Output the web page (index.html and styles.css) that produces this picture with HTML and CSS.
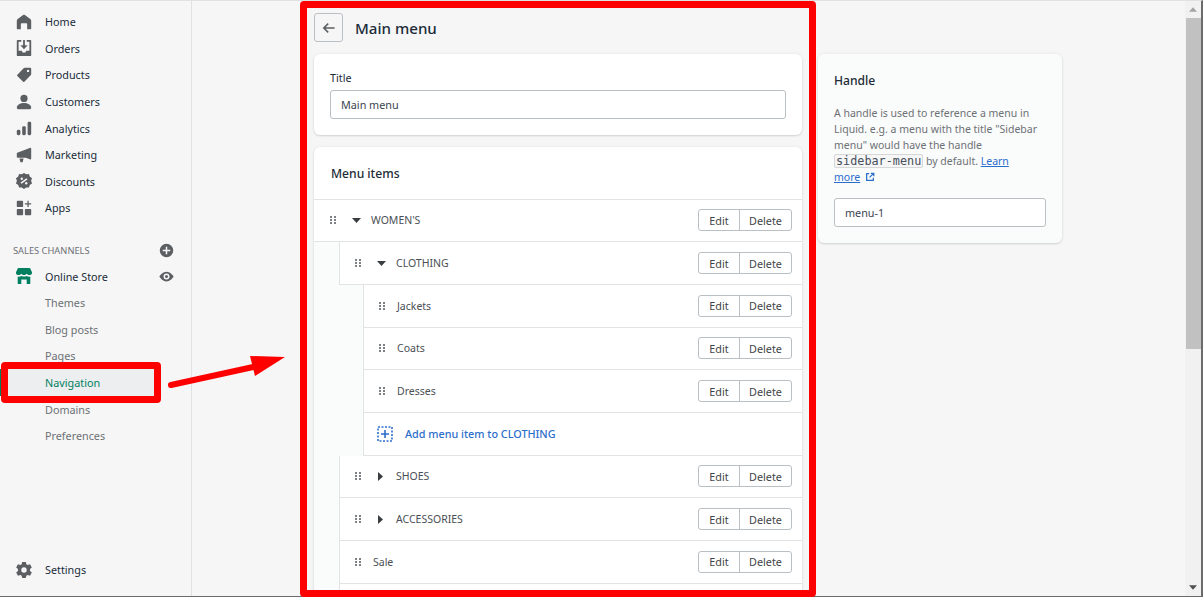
FILE: index.html
```html
<!DOCTYPE html>
<html lang="en">
<head>
<meta charset="utf-8">
<title>Main menu</title>
<link rel="stylesheet" href="styles.css">
</head>
<body>
<svg class="defs" aria-hidden="true">
  <symbol id="grip" viewBox="0 0 6 8"><g fill="#7d8185"><rect x="0" y="0" width="2" height="2"/><rect x="4" y="0" width="2" height="2"/><rect x="0" y="3" width="2" height="2"/><rect x="4" y="3" width="2" height="2"/><rect x="0" y="6" width="2" height="2"/><rect x="4" y="6" width="2" height="2"/></g></symbol>
  <symbol id="down" viewBox="0 0 9 5"><path d="M0 0h9L4.500 5z" fill="#3a3d40"/></symbol>
  <symbol id="right" viewBox="0 0 5 9"><path d="M0 0v9l5-4.500z" fill="#3a3d40"/></symbol>
</svg>
<div class="app">
  <aside class="sidebar">
    <nav class="nav">
      <a class="nav-item"><svg class="ico" viewBox="0 0 20 20"><path d="M2 9c0-1 .4-1.700 1-2.200L9 2.200c.6-.5 1.400-.5 2 0l6 4.600c.6.5 1 1.200 1 2.200v8c0 .6-.4 1-1 1h-3.500v-5.500a1 1 0 0 0-1-1h-5a1 1 0 0 0-1 1V18H3c-.6 0-1-.4-1-1z"/></svg>Home</a>
      <a class="nav-item"><svg class="ico" viewBox="0 0 20 20"><path d="M3 1h4v2H4v10h3.500l1 2h3l1-2H16V3h-3V1h4a1 1 0 0 1 1 1v16a1 1 0 0 1-1 1H3a1 1 0 0 1-1-1V2a1 1 0 0 1 1-1z"/><path d="M9 1h2v6h3l-4 4.500L6 7h3z"/></svg>Orders</a>
      <a class="nav-item"><svg class="ico" viewBox="0 0 20 20"><path fill-rule="evenodd" d="M11 2h6a1 1 0 0 1 1 1v6c0 .5-.2 1-.6 1.400l-7 7a1 1 0 0 1-1.400 0l-6.400-6.400a1 1 0 0 1 0-1.400l7-7C9.900 2.200 10.500 2 11 2zm3.500 2.200a1.300 1.300 0 1 0 0 2.600 1.300 1.300 0 0 0 0-2.600z"/></svg>Products</a>
      <a class="nav-item"><svg class="ico" viewBox="0 0 20 20"><circle cx="10" cy="6" r="4"/><path d="M2 16c0-3 4-5 8-5s8 2 8 5c0 1.200-1 2-2 2H4c-1 0-2-.8-2-2z"/></svg>Customers</a>
      <a class="nav-item"><svg class="ico" viewBox="0 0 20 20"><rect x="2" y="12" width="4" height="6" rx="1.500"/><rect x="8" y="8" width="4" height="10" rx="1.500"/><rect x="14" y="3" width="4" height="15" rx="1.500"/></svg>Analytics</a>
      <a class="nav-item"><svg class="ico" viewBox="0 0 20 20"><path d="M17 2a1 1 0 0 1 1 1v11a1 1 0 0 1-1 1c-.2 0-.4 0-.6-.2L12 13H3a1 1 0 0 1-1-1V8.500a1 1 0 0 1 .5-.9L16.400 2.200c.2-.1.400-.2.600-.2zM5 14h4.500L8.500 18H6z"/></svg>Marketing</a>
      <a class="nav-item"><svg class="ico" viewBox="0 0 20 20"><path d="M10 1l2.500 1.500 3-.2.900 2.800 2.500 1.800-1 2.900 1 2.900-2.500 1.800-.9 2.800-3-.2L10 19l-2.500-1.900-3 .2-.9-2.800-2.500-1.800 1-2.900-1-2.900 2.500-1.800.9-2.800 3 .2z"/><path d="M6.700 12.300l6.600-4.600" stroke="#f6f6f7" stroke-width="1.800"/><circle cx="7.500" cy="7.500" r="1.300" fill="#f6f6f7"/><circle cx="12.500" cy="12.500" r="1.300" fill="#f6f6f7"/></svg>Discounts</a>
      <a class="nav-item"><svg class="ico" viewBox="0 0 20 20"><rect x="2" y="2" width="7" height="7" rx="1"/><rect x="2" y="11" width="7" height="7" rx="1"/><rect x="11" y="11" width="7" height="7" rx="1"/><path d="M13.800 2h1.400v2.800H18v1.400h-2.800V9h-1.400V6.200H11V4.800h2.800z"/></svg>Apps</a>
    </nav>
    <div class="channels">
      <span>SALES CHANNELS</span>
      <svg class="mini" viewBox="0 0 20 20"><path fill-rule="evenodd" d="M10 1a9 9 0 1 1 0 18 9 9 0 0 1 0-18zM9 5v4H5v2h4v4h2v-4h4V9h-4V5z"/></svg>
    </div>
    <nav class="nav">
      <a class="nav-item store"><svg class="ico green" viewBox="0 0 20 20"><path d="M4 1h12c.5 0 .8.2 1 .6L19 6c0 1.700-1.300 3-3 3-1.200 0-2.300-.6-3-1.500-.7.9-1.800 1.500-3 1.500s-2.300-.6-3-1.500C6.300 8.400 5.200 9 4 9 2.300 9 1 7.700 1 6l2-4.400c.2-.4.500-.6 1-.6z"/><path d="M3 10.500c1.400.4 3 .2 4-.6 1.800 1 4.200 1 6 0 1 .8 2.600 1 4 .6V18a1 1 0 0 1-1 1h-3v-5H7v5H4a1 1 0 0 1-1-1z"/></svg>Online Store
        <svg class="mini eye" viewBox="0 0 20 20"><path fill-rule="evenodd" d="M10 3.500c4.500 0 8 3.800 9.500 6.500-1.500 2.700-5 6.500-9.500 6.500S2 12.700.5 10C2 7.300 5.500 3.500 10 3.500zm0 2.500a4 4 0 1 0 0 8 4 4 0 0 0 0-8zm0 2a2 2 0 1 1 0 4 2 2 0 0 1 0-4z"/></svg></a>
      <a class="nav-item sub">Themes</a>
      <a class="nav-item sub">Blog posts</a>
      <a class="nav-item sub">Pages</a>
      <a class="nav-item sub active">Navigation</a>
      <a class="nav-item sub">Domains</a>
      <a class="nav-item sub">Preferences</a>
    </nav>
    <a class="nav-item settings"><svg class="ico" viewBox="0 0 20 20"><path fill-rule="evenodd" d="M8 1h4l.6 2.600 1.500.9 2.600-.8 2 3.500-2 1.800v2l2 1.800-2 3.500-2.600-.8-1.500.9L12 19H8l-.6-2.600-1.500-.9-2.600.8-2-3.500 2-1.800V9L1.300 7.200l2-3.500 2.600.8 1.500-.9zM10 7a3 3 0 1 0 0 6 3 3 0 0 0 0-6z"/></svg>Settings</a>
  </aside>

  <main class="main">
    <div class="primary">
      <header class="page-head">
        <button class="back" aria-label="Back"><svg viewBox="0 0 20 20" width="16" height="16"><path d="M17 10H4M9 4.500L3.500 10 9 15.500" fill="none" stroke="#5c5f62" stroke-width="2"/></svg></button>
        <h1>Main menu</h1>
      </header>
      <section class="card title-card">
        <label class="label">Title</label>
        <div class="input">Main menu</div>
      </section>
      <section class="card menu-card">
        <h2 class="menu-head">Menu items</h2>

        <div class="row"><svg class="grip"><use href="#grip"/></svg><svg class="caret"><use href="#down"/></svg><span class="name">WOMEN'S</span><div class="btns"><span>Edit</span><span>Delete</span></div></div>
        <div class="nest">
          <div class="row"><svg class="grip"><use href="#grip"/></svg><svg class="caret"><use href="#down"/></svg><span class="name">CLOTHING</span><div class="btns"><span>Edit</span><span>Delete</span></div></div>
          <div class="nest">
            <div class="row"><svg class="grip"><use href="#grip"/></svg><span class="name leaf">Jackets</span><div class="btns"><span>Edit</span><span>Delete</span></div></div>
            <div class="row"><svg class="grip"><use href="#grip"/></svg><span class="name leaf">Coats</span><div class="btns"><span>Edit</span><span>Delete</span></div></div>
            <div class="row"><svg class="grip"><use href="#grip"/></svg><span class="name leaf">Dresses</span><div class="btns"><span>Edit</span><span>Delete</span></div></div>
            <div class="row add"><svg class="add-ico" viewBox="0 0 16 16"><rect x="1" y="1" width="14" height="14" fill="none" stroke="#2c6ecb" stroke-width="1.600" stroke-dasharray="2 1.500"/><path d="M7.200 4h1.600v3.200H12v1.600H8.800V12H7.200V8.800H4V7.200h3.200z" fill="#2c6ecb"/></svg><span class="add-text">Add menu item to CLOTHING</span></div>
          </div>
          <div class="row"><svg class="grip"><use href="#grip"/></svg><svg class="caret side"><use href="#right"/></svg><span class="name">SHOES</span><div class="btns"><span>Edit</span><span>Delete</span></div></div>
          <div class="row"><svg class="grip"><use href="#grip"/></svg><svg class="caret side"><use href="#right"/></svg><span class="name">ACCESSORIES</span><div class="btns"><span>Edit</span><span>Delete</span></div></div>
          <div class="row"><svg class="grip"><use href="#grip"/></svg><span class="name leaf">Sale</span><div class="btns"><span>Edit</span><span>Delete</span></div></div>
          <div class="row"></div>
        </div>
      </section>
    </div>
    <aside class="card handle-card">
      <h2 class="handle-head">Handle</h2>
      <p class="help">A handle is used to reference a menu in Liquid. e.g. a menu with the title "Sidebar menu" would have the handle <code>sidebar-menu</code> by default. <a class="link">Learn</a> <span class="keep"><a class="link">more</a> <svg class="ext" viewBox="0 0 12 12"><path d="M5 2H2v8h8V7M7 1.500h3.500V5M10 2L5.500 6.500" fill="none" stroke="#2c6ecb" stroke-width="1.500"/></svg></span></p>
      <div class="input">menu-1</div>
    </aside>
  </main>

  <div class="scrollbar">
    <svg class="sb-arrow" viewBox="0 0 9 5"><path d="M0 5h9L4.500 0z" fill="#a3a3a3"/></svg>
    <div class="sb-thumb"></div>
    <div class="sb-space"></div>
    <svg class="sb-arrow" viewBox="0 0 9 5"><path d="M0 0h9L4.500 5z" fill="#505050"/></svg>
  </div>
</div>

<div class="mark mark-main"></div>
<div class="mark mark-nav"></div>
<svg class="mark-arrow" viewBox="0 0 120 32" width="120" height="32"><path d="M3 29L90 10" stroke="#f00" stroke-width="6" stroke-linecap="round" fill="none"/><path d="M82 0L117 1 87 20z" fill="#f00"/></svg>
</body>
</html>
```
FILE: styles.css
```css
* { box-sizing: border-box; }
html, body { margin: 0; height: 100%; overflow: hidden; }
body {
  font-family: "Noto Sans", "Open Sans", sans-serif;
  font-size: 10.8px;
  color: #212b36;
  background: #f6f6f7;
}
.defs { display: none; }
.app {
  display: flex;
  height: 597px;
  border-top: 1px solid #e1e1e1;
  border-right: 2px solid #6b6b6b;
  border-bottom: 1px solid #6b6b6b;
}
.sidebar {
  width: 192px;
  flex: none;
  border-right: 1px solid #dfe1e3;
  padding-top: 7.500px;
  display: flex;
  flex-direction: column;
}
.nav { display: flex; flex-direction: column; }
.nav-item {
  display: flex;
  align-items: center;
  height: 26.6px;
  padding-left: 15px;
  color: #202c38;
  flex: none;
}
.ico {
  width: 18px;
  height: 18px;
  margin-right: 12px;
  fill: #5c5f62;
  flex: none;
}
.green { fill: #008060; }
.mini { width: 15px; height: 15px; fill: #5c5f62; flex: none; }
.eye { margin-left: auto; margin-right: 17px; }
.channels {
  display: flex;
  align-items: center;
  justify-content: space-between;
  height: 26.6px;
  margin-top: 15px;
  padding: 1px 17px 0 13px;
  font-size: 9.300px;
  color: #6d7175;
}
.sub { padding-left: 45px; color: #6d7175; }
.active { color: #008060; background: #edeef0; margin-right: 30px; box-shadow: inset 2px 0 #008060; }
.settings { margin-top: auto; margin-bottom: 13px; }

.main {
  flex: 1;
  min-width: 0;
  display: flex;
  align-items: flex-start;
  gap: 16px;
  padding-left: 122px;
}
.primary { width: 488px; flex: none; }
.page-head {
  display: flex;
  align-items: center;
  gap: 12px;
  height: 53px;
}
.back {
  width: 29px;
  height: 29px;
  padding: 0;
  display: flex;
  align-items: center;
  justify-content: center;
  background: #f6f6f7;
  border: 1px solid #babfc3;
  border-radius: 3px;
}
h1 { margin: 0; font-size: 15.100px; font-weight: 500; color: #202c38; }
.card {
  background: #fff;
  border-radius: 6px;
  box-shadow: 0 0 4px rgba(23, 24, 24, .06), 0 1px 2px rgba(0, 0, 0, .12);
}
.title-card { padding: 17px 16px 15px; height: 81px; margin-bottom: 12px; }
.label { display: block; height: 19px; line-height: 14px; }
.input {
  display: flex;
  align-items: center;
  height: 29px;
  padding: 0 10px;
  background: #fff;
  border: 1px solid #babfc3;
  border-radius: 3px;
  color: #3a4450;
}
.menu-card { overflow: hidden; height: 600px; }
.menu-head {
  margin: 0;
  display: flex;
  align-items: center;
  height: 52.500px;
  padding: 2px 0 0 17px;
  font-size: 12.100px;
  font-weight: 500;
  border-bottom: 1px solid #e1e3e5;
}
.row {
  display: flex;
  align-items: center;
  height: 42.7px;
  padding-right: 10px;
  background: #fff;
  border-bottom: 1px solid #e1e3e5;
}
.nest {
  padding-left: 25px;
  background: #fafbfb;
}
.nest > .row { box-shadow: inset 1px 0 #e1e3e5; }
.nest > .nest { padding-left: 24px; }
.grip { width: 6px; height: 8px; margin-left: 16px; flex: none; }
.caret { width: 9px; height: 5px; margin-left: 16px; flex: none; }
.caret.side { width: 5px; height: 9px; margin-left: 17px; margin-right: 3px; }
.name { margin-left: 10px; color: #4a4f55; font-size: 10.500px; }
.name.leaf { margin-left: 12px; }
.btns {
  margin-left: auto;
  display: flex;
  height: 22px;
  background: #fff;
  border: 1px solid #babfc3;
  border-radius: 3px;
  font-size: 10.800px;
  color: #3f4448;
}
.btns span {
  display: flex;
  align-items: center;
  justify-content: center;
  width: 40px;
}
.btns span + span { width: 52px; border-left: 1px solid #babfc3; }
.add { padding-left: 14px; }
.add-ico { width: 16px; height: 16px; margin-right: 12px; flex: none; }
.add-text { color: #2c6ecb; font-weight: 500; }

.handle-card {
  width: 244px;
  flex: none;
  height: 189px;
  margin-top: 53px;
  padding: 0 16px;
  background: #fafbfb;
}
.handle-head {
  margin: 0;
  height: 53px;
  display: flex;
  align-items: center;
  font-size: 12.100px;
  font-weight: 500;
}
.help {
  margin: -2px 0 13px;
  line-height: 16px;
  font-size: 10.500px;
  color: #6d7175;
}
code {
  font-family: "DejaVu Sans Mono", "Liberation Mono", monospace;
  font-size: 11.800px;
  line-height: 13px;
  padding: 0 2px;
  white-space: nowrap;
  background: #f6f6f7;
  box-shadow: inset 0 0 0 1px #d5d7d9;
  border-radius: 2px;
  color: #454f5b;
}
.keep { white-space: nowrap; }
.link { color: #2c6ecb; text-decoration: underline; }
.ext { width: 10px; height: 10px; margin-left: 2px; vertical-align: -1px; }

.scrollbar {
  width: 16px;
  flex: none;
  display: flex;
  flex-direction: column;
  align-items: center;
  background: #f1f1f1;
}
.sb-arrow { width: 8px; height: 5px; margin: 6px 0; flex: none; }
.sb-thumb { width: 15px; height: 331px; background: #c1c1c1; flex: none; }
.sb-space { flex: 1; }

.mark { position: absolute; border: 7px solid #f00; border-radius: 4px; }
.mark-main { left: 300px; top: 1px; width: 516px; height: 596px; }
.mark-nav { left: 1px; top: 362px; width: 160px; height: 41px; }
.mark-arrow { position: absolute; left: 168px; top: 356px; }
```
